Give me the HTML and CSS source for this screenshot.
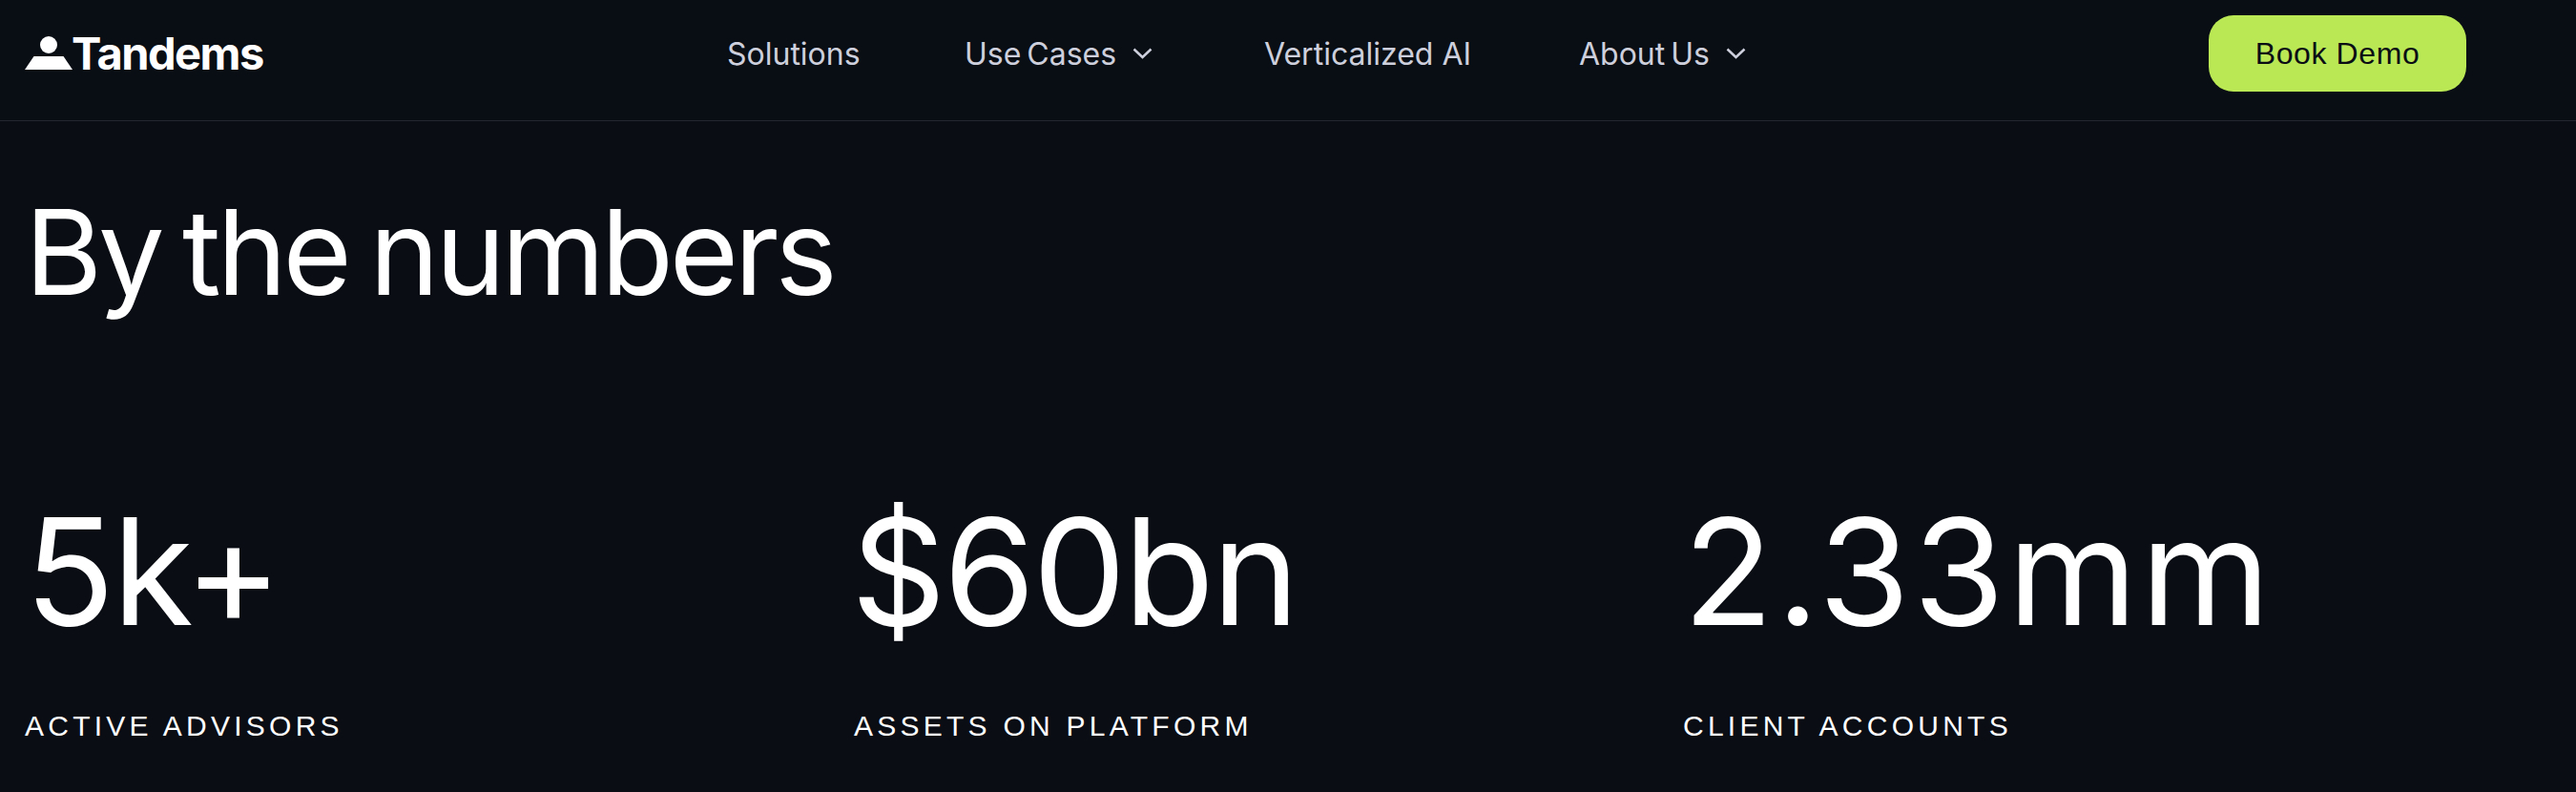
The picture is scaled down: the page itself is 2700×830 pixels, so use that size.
FILE: index.html
```html
<!DOCTYPE html>
<html lang="en">
<head>
    <meta charset="UTF-8">
    <meta name="viewport" content="width=device-width, initial-scale=1.0">
    <title>Tandems</title>
    <link rel="stylesheet" href="styles.css">
</head>
<body>

    <!-- Top navigation -->
    <header class="site-header">
        <a class="logo" href="#">
            <svg class="logo-mark" width="50" height="36" viewBox="0 0 50 36">
                <circle cx="25" cy="9" r="9"/>
                <path d="M9.500 21H40.500L50 35H0Z"/>
            </svg>
            <span class="logo-text">Tandems</span>
        </a>
        <nav class="main-nav">
            <a href="#" class="nav-solutions">Solutions</a>
            <a href="#" class="nav-use-cases">Use Cases
                <svg class="chevron" width="21" height="12" viewBox="0 0 21 12"><path d="M1.500 1.500L10.500 10L19.500 1.500"/></svg>
            </a>
            <a href="#" class="nav-vertical">Verticalized AI</a>
            <a href="#" class="nav-about">About Us
                <svg class="chevron" width="21" height="12" viewBox="0 0 21 12"><path d="M1.500 1.500L10.500 10L19.500 1.500"/></svg>
            </a>
        </nav>
        <a class="demo-btn" href="#">Book Demo</a>
    </header>

    <!-- Stats section -->
    <main class="numbers">
        <h1>By the numbers</h1>
        <div class="stats">
            <div class="stat stat-advisors">
                <div class="stat-value">5k+</div>
                <div class="stat-label">ACTIVE ADVISORS</div>
            </div>
            <div class="stat stat-assets">
                <div class="stat-value">$60bn</div>
                <div class="stat-label">ASSETS ON PLATFORM</div>
            </div>
            <div class="stat stat-clients">
                <div class="stat-value">2.33mm</div>
                <div class="stat-label">CLIENT ACCOUNTS</div>
            </div>
        </div>
    </main>

</body>
</html>
```

FILE: styles.css
```css
/* Basic reset */
* {
    margin: 0;
    padding: 0;
    box-sizing: border-box;
}

body {
    font-family: "Liberation Sans", Arial, sans-serif;
    background: #0a0d14;
    color: #fff;
    height: 830px;
    overflow: hidden;
}

a {
    text-decoration: none;
    color: inherit;
}

/* Header */
.site-header {
    height: 127px;
    border-bottom: 1px solid #24272f;
    padding: 16px 115px 0 26px;
    display: flex;
    align-items: flex-start;
    background: #090d14;
}

.logo {
    display: flex;
    align-items: flex-start;
    width: 736px;
    padding-top: 16px;
}

.logo-mark {
    fill: #fff;
    margin-top: 6px;
}

.logo-text {
    font-family: Inter, sans-serif;
    font-weight: 700;
    font-size: 47px;
    line-height: 47px;
    letter-spacing: -1.5px;
    margin-left: -1px;
}

.main-nav {
    display: flex;
    align-items: center;
    height: 80px;
    width: 1553px;
    font-family: Inter, sans-serif;
    font-size: 32px;
    color: #cdd0dc;
}

.main-nav a {
    display: flex;
    align-items: center;
    gap: 17px;
}

.nav-solutions { width: 249px; }
.nav-use-cases { width: 314px; word-spacing: -3px; }
.nav-vertical { width: 330px; }
.nav-about { word-spacing: -3px; }

.chevron {
    fill: none;
    stroke: #cdd0dc;
    stroke-width: 2.5;
}

.demo-btn {
    width: 270px;
    height: 80px;
    border-radius: 26px;
    background: #b9e854;
    color: #0a0d14;
    font-size: 32px;
    letter-spacing: 0.6px;
    display: flex;
    align-items: center;
    justify-content: center;
}

/* Stats */
.numbers {
    padding: 67px 26px 0;
}

h1 {
    font-family: Inter, sans-serif;
    font-size: 124px;
    font-weight: 400;
    line-height: 140px;
    letter-spacing: -4.2px;
    word-spacing: -8px;
}

.stats {
    display: grid;
    grid-template-columns: 869px 869px 869px;
    margin-top: 180px;
}

.stat-value {
    font-family: Inter, sans-serif;
    font-size: 155px;
    line-height: 170px;
}

.stat-advisors .stat-value { letter-spacing: -2.5px; }
.stat-assets .stat-value { letter-spacing: -2.5px; margin-left: -3px; }
.stat-clients .stat-value { letter-spacing: 3.5px; }

.stat-label {
    font-size: 30px;
    letter-spacing: 4.25px;
    line-height: 36px;
    margin-top: 59px;
}
```
